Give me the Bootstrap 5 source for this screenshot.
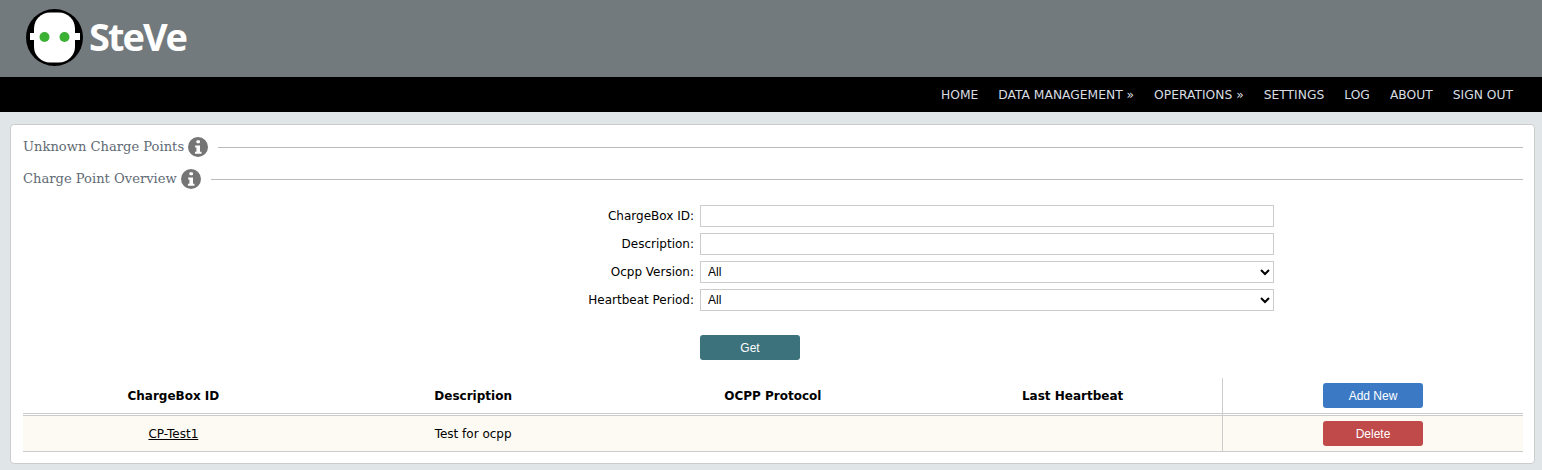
<!DOCTYPE html>
<html lang="en">
<head>
    <meta charset="UTF-8">
    <meta name="viewport" content="width=device-width, initial-scale=1.0">
    <title>SteVe</title>
    <link href="https://cdn.jsdelivr.net/npm/bootstrap@5.3.0/dist/css/bootstrap.min.css" rel="stylesheet">
    <style>
        body {
            background-color: #e0e5e8;
            font-family: "DejaVu Sans", sans-serif;
            font-size: 12px;
            color: #000;
            overflow: hidden;
        }
        .top-banner {
            height: 77px;
            background-color: #737a7d;
            padding: 8px 0 0 25px;
        }
        .logo-text {
            font-family: "Open Sans", sans-serif;
            font-weight: 700;
            font-size: 38px;
            line-height: 56px;
            letter-spacing: -2px;
            color: #fff;
        }
        .menu-bar {
            height: 35px;
            background-color: #000;
            padding: 2px 29px 0 0;
            gap: 20px;
        }
        .menu-bar a {
            color: #d8dce0;
            font-family: "DejaVu Sans", sans-serif;
            font-size: 12.3px;
            text-decoration: none;
            text-transform: uppercase;
        }
        .content-box {
            margin: 12px 7px 0 10px;
            height: 340px;
            padding: 6px 11px 0 12px;
            background-color: #fff;
            border: 1px solid #ccc;
            border-radius: 4px;
        }
        .section-title {
            height: 32px;
            font-family: "DejaVu Serif", serif;
            font-size: 13.1px;
            color: #5f6a74;
        }
        .section-title hr {
            border-top: 1px solid #bbb;
            opacity: 1;
            margin: 0 0 0 10px;
        }
        .info-dot {
            width: 20px;
            height: 20px;
            margin-left: 4px;
            flex-shrink: 0;
        }
        .filter-form {
            padding-top: 10px;
        }
        .filter-row {
            height: 22px;
            margin-bottom: 6px;
        }
        .filter-label {
            width: 671px;
            margin-right: 6px;
            text-align: right;
        }
        .filter-input {
            width: 574px;
            height: 22px;
            padding: 0 3px;
            font-family: "Liberation Sans", sans-serif;
            font-size: 12px;
            background-color: #fff;
            border: 1px solid #ccc;
            border-radius: 0;
        }
        .action-btn {
            width: 100px;
            height: 25px;
            padding: 0;
            font-family: "Liberation Sans", sans-serif;
            font-size: 12px;
            color: #fff;
            border: 0;
            border-radius: 3px;
        }
        .btn-get { background-color: #3c727c; margin: 24px 0 18px 677px; display: block; }
        .btn-add { background-color: #3c79c4; }
        .btn-del { background-color: #c04a4a; }
        .data-table {
            width: 1500px;
            table-layout: fixed;
            border-collapse: separate;
            border-spacing: 0;
            text-align: center;
        }
        .data-table th, .data-table td {
            padding: 0 0 0 1px;
            vertical-align: middle;
        }
        .data-table th {
            height: 38px;
            border-bottom: 3px double #ccc;
        }
        .data-table td {
            height: 36px;
            background-color: #fdfaf3;
            border-bottom: 1px solid #ccc;
        }
        .data-table .action-cell {
            width: 301px;
            padding: 0;
            border-left: 1px solid #ccc;
        }
        .data-table a {
            color: #000;
        }
    </style>
</head>
<body>
    <!-- Header -->
    <div class="top-banner d-flex align-items-start">
        <svg width="60" height="60" viewBox="0 0 60 60" class="flex-shrink-0">
            <circle cx="29.5" cy="29.5" r="28.5" fill="#000"/>
            <rect x="9" y="4.5" width="41" height="50" rx="16" fill="#fff"/>
            <rect x="5" y="25" width="50" height="7" fill="#fff"/>
            <circle cx="19.5" cy="29" r="5" fill="#3bb033"/>
            <circle cx="39.5" cy="29" r="5" fill="#3bb033"/>
        </svg>
        <span class="logo-text ms-1">SteVe</span>
    </div>

    <!-- Menu -->
    <nav class="menu-bar d-flex justify-content-end align-items-center">
        <a href="#">Home</a>
        <a href="#">Data Management »</a>
        <a href="#">Operations »</a>
        <a href="#">Settings</a>
        <a href="#">Log</a>
        <a href="#">About</a>
        <a href="#">Sign Out</a>
    </nav>

    <div class="content-box">
        <div class="section-title d-flex align-items-center">
            <span>Unknown Charge Points</span>
            <svg class="info-dot" viewBox="0 0 19 19"><circle cx="9.5" cy="9.5" r="9.5" fill="#757575"/><rect x="8" y="3" width="3.4" height="3" rx="1" fill="#fff"/><path d="M6.8 8h4.6v6h1.4v2H6.6v-2H8v-4H6.8z" fill="#fff"/></svg>
            <hr class="flex-grow-1">
        </div>
        <div class="section-title d-flex align-items-center">
            <span>Charge Point Overview</span>
            <svg class="info-dot" viewBox="0 0 19 19"><circle cx="9.5" cy="9.5" r="9.5" fill="#757575"/><rect x="8" y="3" width="3.4" height="3" rx="1" fill="#fff"/><path d="M6.8 8h4.6v6h1.4v2H6.6v-2H8v-4H6.8z" fill="#fff"/></svg>
            <hr class="flex-grow-1">
        </div>

        <form class="filter-form">
            <div class="filter-row d-flex align-items-center">
                <label class="filter-label">ChargeBox ID:</label>
                <input type="text" class="filter-input">
            </div>
            <div class="filter-row d-flex align-items-center">
                <label class="filter-label">Description:</label>
                <input type="text" class="filter-input">
            </div>
            <div class="filter-row d-flex align-items-center">
                <label class="filter-label">Ocpp Version:</label>
                <select class="filter-input"><option>All</option></select>
            </div>
            <div class="filter-row d-flex align-items-center">
                <label class="filter-label">Heartbeat Period:</label>
                <select class="filter-input"><option>All</option></select>
            </div>
            <button type="button" class="action-btn btn-get">Get</button>
        </form>

        <table class="data-table">
            <thead>
                <tr>
                    <th>ChargeBox ID</th>
                    <th>Description</th>
                    <th>OCPP Protocol</th>
                    <th>Last Heartbeat</th>
                    <th class="action-cell"><button type="button" class="action-btn btn-add">Add New</button></th>
                </tr>
            </thead>
            <tbody>
                <tr>
                    <td><a href="#">CP-Test1</a></td>
                    <td>Test for ocpp</td>
                    <td></td>
                    <td></td>
                    <td class="action-cell"><button type="button" class="action-btn btn-del">Delete</button></td>
                </tr>
            </tbody>
        </table>
    </div>

    <script src="https://cdn.jsdelivr.net/npm/bootstrap@5.3.0/dist/js/bootstrap.bundle.min.js"></script>
</body>
</html>
